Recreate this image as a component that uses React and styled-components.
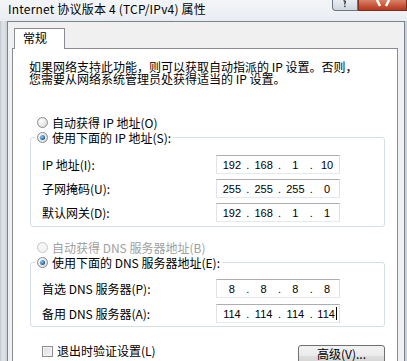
import styled, { createGlobalStyle } from 'styled-components';

const uiFont = `"Noto Sans CJK SC", "Noto Sans", sans-serif`;

const GlobalStyle = createGlobalStyle`
  html, body {
    margin: 0;
    padding: 0;
    background: #d3d9e0;
  }
`;

const Window = styled.div`
  width: 407px;
  height: 361px;
  overflow: hidden;
  display: flex;
  flex-direction: column;
  background: linear-gradient(to right, #c4cad1 0px, #e2e6eb 3px, #cbd1d8 7px);
  font-family: ${uiFont};
  font-size: 12px;
  color: #000;
`;

const TitleBar = styled.div`
  height: 21px;
  flex: none;
  display: flex;
  justify-content: space-between;
  align-items: flex-start;
  background: linear-gradient(to bottom, #f3f5f8, #e9edf2);
`;

const Title = styled.div`
  padding: 2px 0 0 8px;
  line-height: 14px;
  white-space: nowrap;
  letter-spacing: 0.2px;
  text-shadow: 0 0 6px #fff;
`;

const CaptionButtons = styled.div`
  display: flex;
`;

// 도움말 / 닫기 버튼 (위쪽이 잘려 있음)
const CaptionButton = styled.div`
  height: 11px;
  width: ${props => props.$w}px;
  box-sizing: border-box;
  border: 1px solid ${props => (props.$close ? '#7d2d1e' : '#6c7584')};
  border-top: none;
  border-radius: ${props => (props.$close ? '0' : '0 0 0 4px')};
  background: ${props =>
    props.$close
      ? 'linear-gradient(to bottom, #d8836a, #c24a30 70%, #b33a22)'
      : 'linear-gradient(to bottom, #e9edf2, #cfd6df)'};
  display: flex;
  justify-content: center;
  align-items: flex-start;
`;

const Body = styled.div`
  flex: 1;
  min-height: 0;
  display: flex;
  padding-left: 7px;
`;

const Dialog = styled.div`
  width: 398px;
  box-sizing: border-box;
  border: 1px solid #7b848e;
  border-bottom: none;
  background: #f0f0f0;
  padding: 6px 6px 0 4px;
  display: flex;
  flex-direction: column;
`;

const TabStrip = styled.div`
  display: flex;
  padding-left: 2px;
`;

const Tab = styled.div`
  position: relative;
  z-index: 1;
  width: 51px;
  height: 21px;
  box-sizing: border-box;
  border: 1px solid #898c95;
  border-bottom: none;
  background: #fff;
  margin-bottom: -1px;
  padding: 2px 0 0 8px;
  line-height: 14px;
`;

const Panel = styled.div`
  flex: 1;
  border: 1px solid #898c95;
  background: #fff;
  padding: 12px 0 0 17px;
`;

const Intro = styled.p`
  margin: 0 0 0 -1px;
  line-height: 12px;
  white-space: nowrap;
`;

const RadioRow = styled.div`
  display: flex;
  align-items: center;
  gap: 4px;
  height: 15px;
  margin-top: ${props => props.$mt || 0}px;
  padding-left: ${props => (props.$inset ? 0 : 7)}px;
  color: ${props => (props.$disabled ? '#a0a0a0' : '#000')};
  white-space: nowrap;
  line-height: 15px;
`;

const Radio = styled.span`
  width: 11px;
  height: 11px;
  box-sizing: border-box;
  border-radius: 50%;
  border: 1px solid ${props => (props.$disabled ? '#c6c6c6' : '#8a8a8a')};
  background: ${props =>
    props.$disabled
      ? '#f4f4f4'
      : 'radial-gradient(circle at 35% 35%, #ffffff, #d4d4d4)'};
  display: flex;
  align-items: center;
  justify-content: center;
  flex: none;

  &::after {
    content: '';
    display: ${props => (props.$checked ? 'block' : 'none')};
    width: 5px;
    height: 5px;
    border-radius: 50%;
    background: radial-gradient(circle at 35% 35%, #8fd0ff, #1d5b9c 70%, #123f73);
  }
`;

const Group = styled.fieldset`
  margin: 0;
  width: 355px;
  min-inline-size: auto;
  box-sizing: border-box;
  border: 1px solid #d5dfe5;
  border-radius: 3px;
  padding: ${props => props.$pt}px 11px ${props => props.$pb}px 11px;
`;

const Legend = styled.legend`
  padding: 0 2px 0 1px;
  margin-left: -6px;
`;

const FieldGrid = styled.div`
  display: grid;
  grid-template-columns: 174px 124px;
  row-gap: ${props => props.$gap}px;
  align-items: center;
`;

const Label = styled.span`
  line-height: 14px;
  white-space: nowrap;
`;

const IpBox = styled.div`
  width: 124px;
  height: 19px;
  box-sizing: border-box;
  border: 1px solid;
  border-color: #abadb3 #dbdfe6 #e3e9ef #e2e3ea;
  padding-left: 3px;
  display: flex;
  align-items: center;
  font-family: "Liberation Sans", Arial, sans-serif;
  font-size: 11px;
`;

const Octet = styled.span`
  width: 24px;
  text-align: center;
  white-space: nowrap;
`;

const Dot = styled.span`
  width: 8px;
  text-align: center;
`;

const Caret = styled.span`
  display: inline-block;
  width: 1px;
  height: 13px;
  background: #000;
  vertical-align: -2px;
  margin-left: 1px;
`;

const Footer = styled.div`
  width: 355px;
  margin-top: 18px;
  padding-left: 12px;
  box-sizing: border-box;
  display: flex;
  justify-content: space-between;
  align-items: flex-start;
`;

const CheckRow = styled.label`
  display: flex;
  align-items: center;
  gap: 4px;
  margin-top: -1px;
  line-height: 14px;
`;

const Check = styled.span`
  width: 11px;
  height: 11px;
  box-sizing: border-box;
  border: 1px solid #8e8f8f;
  background: linear-gradient(135deg, #dcdcdc, #f6f6f6);
  box-shadow: inset 0 0 0 1px #f4f4f4;
`;

const Button = styled.div`
  width: 87px;
  height: 23px;
  box-sizing: border-box;
  border: 1px solid #707070;
  border-radius: 3px;
  background: linear-gradient(to bottom, #f2f2f2 0%, #ebebeb 45%, #dddddd 50%, #cfcfcf 100%);
  text-align: center;
  padding-top: 1px;
  line-height: 14px;
`;

function IpField({ parts, caret }) {
  return (
    <IpBox>
      {parts.map((p, i) => (
        <>
          {i > 0 && <Dot key={'d' + i}>.</Dot>}
          <Octet key={'o' + i}>
            {p}
            {caret && i === parts.length - 1 && <Caret />}
          </Octet>
        </>
      ))}
    </IpBox>
  );
}

function App() {
  return (
    <>
      <GlobalStyle />
      <Window>
        <TitleBar>
          <Title>Internet 协议版本 4 (TCP/IPv4) 属性</Title>
          <CaptionButtons>
            <CaptionButton $w={26}>
              <svg width="8" height="8" viewBox="0 0 8 8">
                <path d="M2.5 0.5 Q5.5 1.5 3.8 3 L3.8 4.5" stroke="#3b4451" strokeWidth="1.4" fill="none" />
                <rect x="3.1" y="5.6" width="1.5" height="1.5" fill="#3b4451" />
              </svg>
            </CaptionButton>
            <CaptionButton $w={49} $close>
              <svg width="14" height="7" viewBox="0 0 14 7">
                <path d="M1 0 L4 6 M13 0 L10 6" stroke="#fff" strokeWidth="2.4" fill="none" />
              </svg>
            </CaptionButton>
          </CaptionButtons>
        </TitleBar>

        <Body>
          <Dialog>
            <TabStrip>
              <Tab>常规</Tab>
            </TabStrip>
            <Panel>
              <Intro>
                如果网络支持此功能，则可以获取自动指派的 IP 设置。否则，
                <br />
                您需要从网络系统管理员处获得适当的 IP 设置。
              </Intro>

              <RadioRow $mt={30}>
                <Radio />
                自动获得 IP 地址(O)
              </RadioRow>
              <Group $pt={10} $pb={4}>
                <Legend>
                  <RadioRow $inset>
                    <Radio $checked />
                    使用下面的 IP 地址(S):
                  </RadioRow>
                </Legend>
                <FieldGrid $gap={5}>
                  <Label>IP 地址(I):</Label>
                  <IpField parts={['192', '168', '1', '10']} />
                  <Label>子网掩码(U):</Label>
                  <IpField parts={['255', '255', '255', '0']} />
                  <Label>默认网关(D):</Label>
                  <IpField parts={['192', '168', '1', '1']} />
                </FieldGrid>
              </Group>

              <RadioRow $mt={13} $disabled>
                <Radio $disabled />
                自动获得 DNS 服务器地址(B)
              </RadioRow>
              <Group $pt={9} $pb={3}>
                <Legend>
                  <RadioRow $inset>
                    <Radio $checked />
                    使用下面的 DNS 服务器地址(E):
                  </RadioRow>
                </Legend>
                <FieldGrid $gap={6}>
                  <Label>首选 DNS 服务器(P):</Label>
                  <IpField parts={['8', '8', '8', '8']} />
                  <Label>备用 DNS 服务器(A):</Label>
                  <IpField parts={['114', '114', '114', '114']} caret />
                </FieldGrid>
              </Group>

              <Footer>
                <CheckRow>
                  <Check />
                  退出时验证设置(L)
                </CheckRow>
                <Button>高级(V)...</Button>
              </Footer>
            </Panel>
          </Dialog>
        </Body>
      </Window>
    </>
  );
}

export default App;
